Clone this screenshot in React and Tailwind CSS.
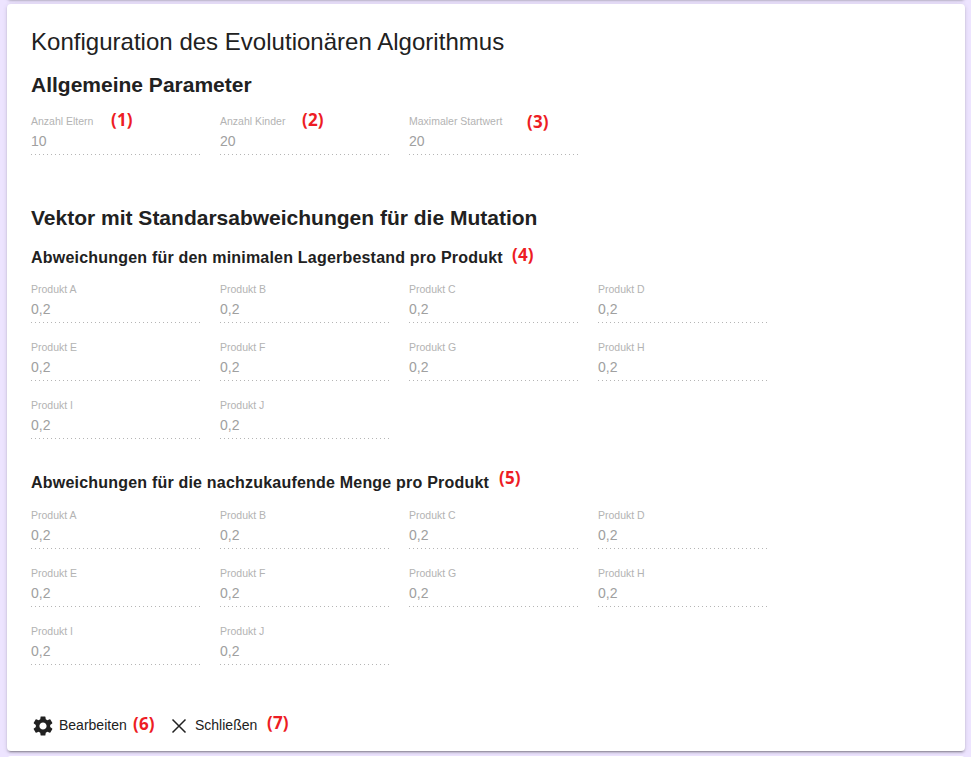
import { MdSettings } from "react-icons/md";

const products = ["A", "B", "C", "D", "E", "F", "G", "H", "I", "J"];

function Mark({ n, className = "" }) {
  return (
    <span className={`absolute whitespace-nowrap font-['Open_Sans',sans-serif] text-[17px] leading-[20px] font-bold tracking-[0.1px] text-[#ed1c24] ${className}`}>
      ({n})
    </span>
  );
}

function Field({ label, value, children }) {
  return (
    <div className="relative h-[58px] w-[170px]">
      <div className="h-[18px] text-[10.5px] leading-[18px] whitespace-nowrap text-[#b3b3b3]">{label}</div>
      <div className="h-[24px] text-[14px] leading-[22px] text-[#a0a0a0]">{value}</div>
      <div className="h-px bg-[linear-gradient(to_right,#b5b5b5_0,#b5b5b5_33%,transparent_33%)] bg-[length:4px_1px]" />
      {children}
    </div>
  );
}

function ProductGrid() {
  return (
    <div className="grid grid-cols-[repeat(4,170px)] gap-x-[19px]">
      {products.map((p) => (
        <Field key={p} label={`Produkt ${p}`} value="0,2" />
      ))}
    </div>
  );
}

const cardShadow = "shadow-[0_3px_1px_-2px_rgba(0,0,0,0.2),0_2px_2px_0_rgba(0,0,0,0.14),0_1px_5px_0_rgba(0,0,0,0.12)]";

export default function App() {
  return (
    <div className="flex h-[757px] w-[971px] flex-col gap-[5px] overflow-hidden bg-[#ede4ff] pr-[6px] pl-[7px] font-['Liberation_Sans',Arial,sans-serif] text-[#212121]">
      <div className={`-mt-[20px] h-[19px] shrink-0 rounded-[4px] bg-white ${cardShadow}`} />
      <main className={`h-[747px] shrink-0 rounded-[4px] bg-white px-6 pt-[22px] ${cardShadow}`}>
        <h1 className="h-[44px] text-[24px] leading-[32px] tracking-[0.02px] whitespace-nowrap">Konfiguration des Evolutionären Algorithmus</h1>
        <h2 className="h-[42px] text-[21px] leading-[30px] font-bold whitespace-nowrap">Allgemeine Parameter</h2>
        <div className="flex h-[91px] gap-[19px]">
          <Field label="Anzahl Eltern" value="10"><Mark n={1} className="top-[-2px] left-[80px]" /></Field>
          <Field label="Anzahl Kinder" value="20"><Mark n={2} className="top-[-2px] left-[82px]" /></Field>
          <Field label="Maximaler Startwert" value="20"><Mark n={3} className="top-0 left-[118px]" /></Field>
        </div>
        <h2 className="h-[42px] text-[21px] leading-[30px] font-bold whitespace-nowrap">Vektor mit Standarsabweichungen für die Mutation</h2>
        <h3 className="relative h-[35px] text-[16px] leading-[26px] font-bold tracking-[0.205px] whitespace-nowrap">
          Abweichungen für den minimalen Lagerbestand pro Produkt
          <Mark n={4} className="top-0 left-[481px]" />
        </h3>
        <ProductGrid />
        <h3 className="relative mt-[16px] h-[36px] text-[16px] leading-[26px] font-bold tracking-[0.205px] whitespace-nowrap">
          Abweichungen für die nachzukaufende Menge pro Produkt
          <Mark n={5} className="top-[-2px] left-[468px]" />
        </h3>
        <ProductGrid />
        <div className="mt-[34px] flex h-6 items-center text-[14px]">
          <button className="relative flex w-[136px] items-center gap-1">
            <MdSettings className="size-6" />
            <span className="pb-[2px]">Bearbeiten</span>
            <Mark n={6} className="top-0 left-[102px]" />
          </button>
          <button className="relative flex items-center gap-1">
            <svg className="size-6" viewBox="0 0 24 24" fill="none" stroke="currentColor" strokeWidth="1.5">
              <path d="M5.5 5.5 18.5 18.5M18.5 5.5 5.5 18.5" />
            </svg>
            <span className="pb-[2px]">Schließen</span>
            <Mark n={7} className="top-[-1px] left-[100px]" />
          </button>
        </div>
      </main>
      <div className="h-[20px] shrink-0 rounded-[4px] bg-white" />
    </div>
  );
}
